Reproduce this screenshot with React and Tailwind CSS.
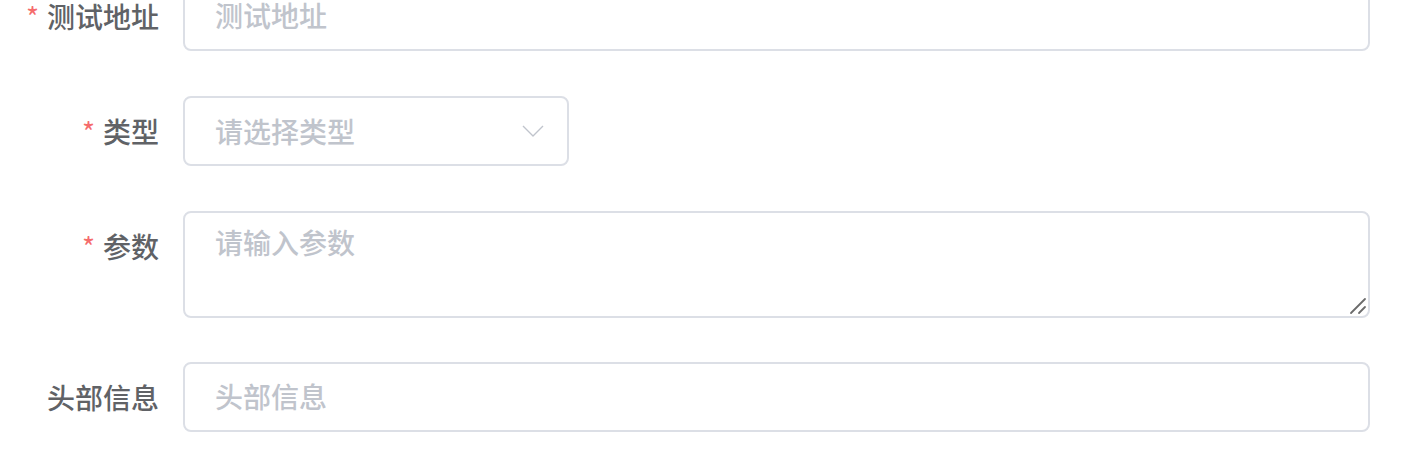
import React from 'react';

const font = { fontFamily: '"Noto Sans CJK SC", "Noto Sans", sans-serif' };

function Label({ required, children }) {
  return (
    <label className="w-[183px] shrink-0 pr-[24px] h-[70px] flex items-center justify-end text-[28px] font-medium text-[#606266]">
      {required && <span className="text-[#f56c6c] mr-[8px] font-normal">*</span>}
      {children}
    </label>
  );
}

function ChevronDown() {
  return (
    <svg width="22" height="12" viewBox="0 0 22 12" fill="none" className="shrink-0">
      <path d="M1 1 L11 11 L21 1" stroke="#c0c4cc" strokeWidth="1.4" strokeLinejoin="round" />
    </svg>
  );
}

function ResizeGrip() {
  return (
    <svg width="18" height="18" viewBox="0 0 18 18" className="absolute right-[3px] bottom-[3px] pointer-events-none">
      <path d="M2 16 L16 2" stroke="#6b6b6b" strokeWidth="1.8" strokeLinecap="round" />
      <path d="M10 16 L16 10" stroke="#6b6b6b" strokeWidth="1.8" strokeLinecap="round" />
    </svg>
  );
}

export default function App() {
  return (
    <div className="w-[1410px] h-[449px] overflow-hidden bg-white" style={font}>
      <form className="flex flex-col -mt-[19px]">
        {/* 测试地址 */}
        <div className="flex mb-[45px]">
          <Label required>测试地址</Label>
          <input
            placeholder="测试地址"
            className="w-[1187px] h-[70px] border-2 border-[#dcdfe6] rounded-[8px] px-[30px] pb-[2px] text-[28px] font-medium text-[#606266] placeholder:text-[#c0c4cc] outline-none"
          />
        </div>

        {/* 类型 */}
        <div className="flex mb-[45px]">
          <Label required>类型</Label>
          <div className="w-[386px] h-[70px] border-2 border-[#dcdfe6] rounded-[8px] pl-[30px] pr-[23px] flex items-center justify-between">
            <span className="text-[28px] font-medium text-[#c0c4cc]">请选择类型</span>
            <ChevronDown />
          </div>
        </div>

        {/* 参数 */}
        <div className="flex mb-[44px]">
          <Label required>参数</Label>
          <div className="relative w-[1187px] h-[107px]">
            <textarea
              placeholder="请输入参数"
              className="w-full h-full resize-none border-2 border-[#dcdfe6] rounded-[8px] px-[30px] pt-[8px] pb-[10px] text-[28px] leading-[42px] font-medium text-[#606266] placeholder:text-[#c0c4cc] outline-none block"
            />
            <ResizeGrip />
          </div>
        </div>

        {/* 头部信息 */}
        <div className="flex">
          <Label>头部信息</Label>
          <input
            placeholder="头部信息"
            className="w-[1187px] h-[70px] border-2 border-[#dcdfe6] rounded-[8px] px-[30px] pb-[2px] text-[28px] font-medium text-[#606266] placeholder:text-[#c0c4cc] outline-none"
          />
        </div>
      </form>
    </div>
  );
}
